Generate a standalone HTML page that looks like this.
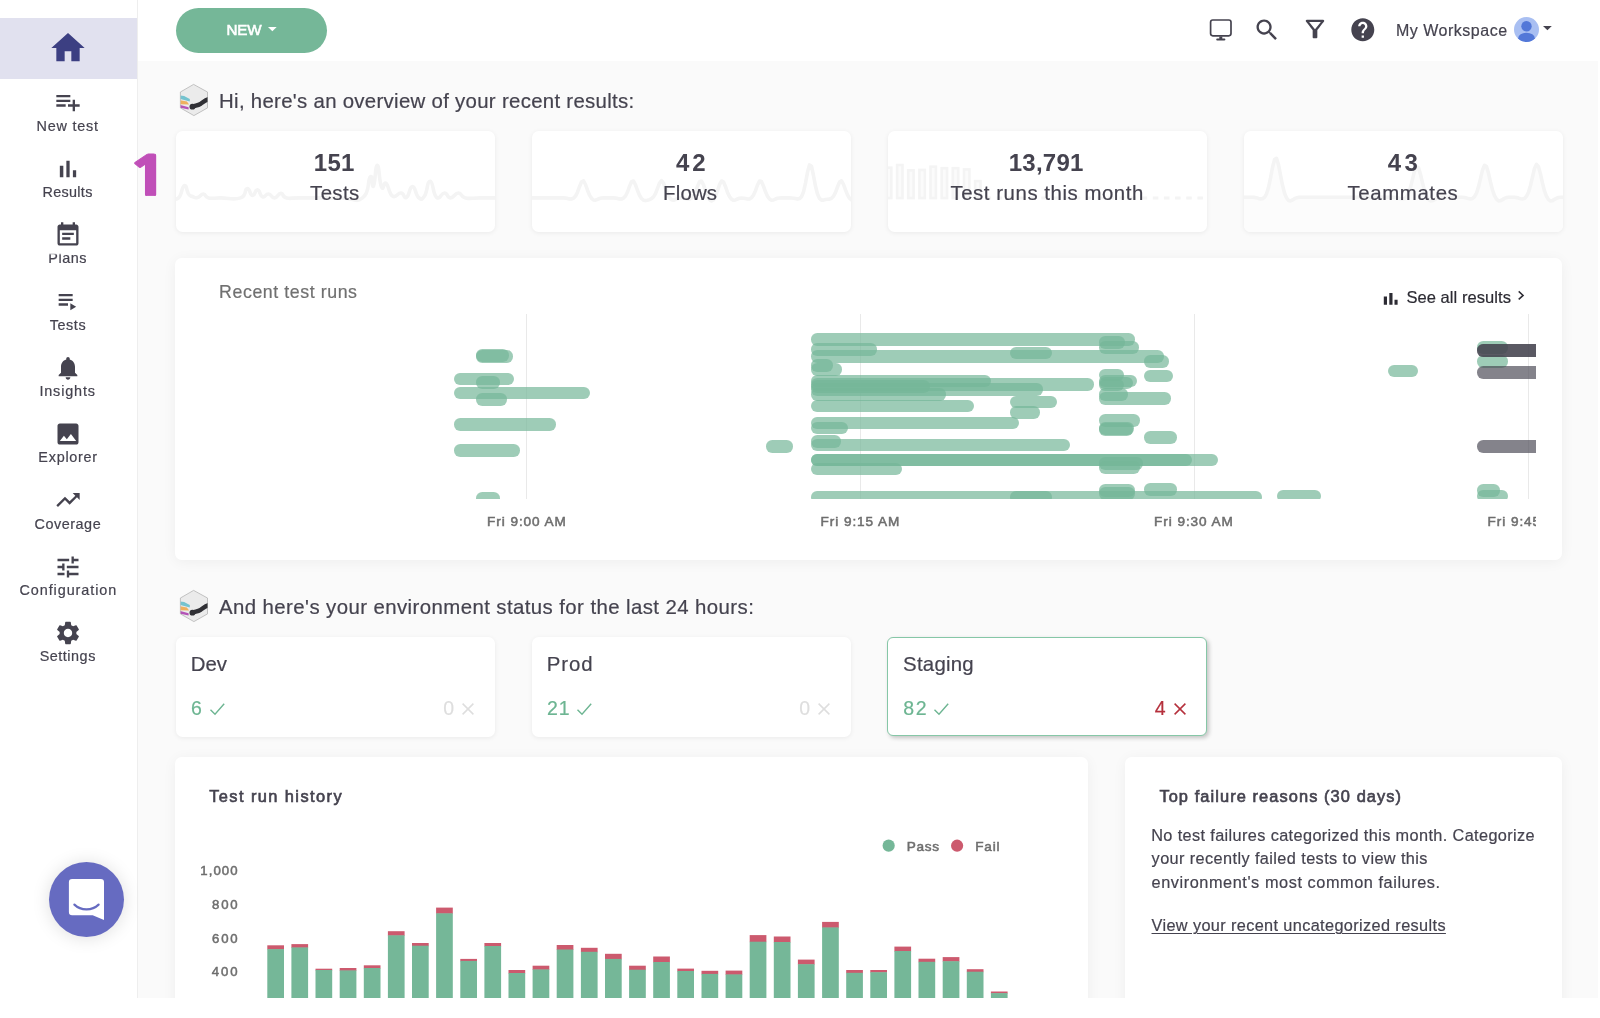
<!DOCTYPE html>
<html lang="en"><head><meta charset="utf-8"><title>Dashboard</title>
<style>
*{box-sizing:border-box;margin:0;padding:0}
html,body{width:1600px;height:1018px;background:#fff;overflow:hidden}
body{font-family:"Liberation Sans",sans-serif;color:#45434f;position:relative}
#app{position:absolute;left:0;top:0;width:1598px;height:998px;overflow:hidden;background:#fafafa}
#app{will-change:transform}
.abs,.ic,.t{position:absolute}
.ic{display:block;overflow:visible}
.t{white-space:nowrap;line-height:1}
.card{position:absolute;background:#fff;border-radius:6.500px;box-shadow:0 1px 5px rgba(0,0,0,.065)}
.big{box-shadow:0 2px 14px rgba(0,0,0,.05)}
#side{position:absolute;left:0;top:0;width:138px;height:998px;background:#fff;border-right:1.800px solid #eee}
#top{position:absolute;left:138px;top:0;width:1460px;height:60.500px;background:#fff}
.pill{position:absolute;height:12.500px;border-radius:6.250px}
</style></head><body><div id="app">
<div id="side"><div class="abs" style="left:0;top:18px;width:136.500px;height:60.500px;background:#e1e1ef"></div><svg class="ic" style="left:47.5px;top:28px;width:40px;height:40px" viewBox="0 0 24 24"><path fill="#3c3f82" d="M10 20v-6h4v6h5v-8h3L12 3 2 12h3v8z"/></svg><svg class="ic" style="left:53.5px;top:88.4px;width:28px;height:28px" viewBox="0 0 24 24"><path fill="#45434f" d="M14 10H2v2h12v-2zm0-4H2v2h12V6zm4 8v-4h-2v4h-4v2h4v4h2v-4h4v-2h-4zM2 16h8v-2H2v2z"/></svg><div class="t" style="left:36.55px;top:119.00px;font-size:14.4px;letter-spacing:0.769px;-webkit-text-stroke:.2px;">New test</div><svg class="ic" style="left:53.5px;top:154.7px;width:28px;height:28px" viewBox="0 0 24 24"><path fill="#45434f" d="M5 9.2h3V19H5zM10.6 5h2.8v14h-2.8zm5.6 8H19v6h-2.8z"/></svg><div class="t" style="left:42.45px;top:185.00px;font-size:14.4px;letter-spacing:0.322px;-webkit-text-stroke:.2px;">Results</div><svg class="ic" style="left:53.5px;top:221.0px;width:28px;height:28px" viewBox="0 0 24 24"><path fill="#45434f" d="M17 10H7v2h10v-2zm2-7h-1V1h-2v2H8V1H6v2H5c-1.11 0-1.99.9-1.99 2L3 19c0 1.1.89 2 2 2h14c1.1 0 2-.9 2-2V5c0-1.1-.9-2-2-2zm0 16H5V8h14v11zm-5-5H7v2h7v-2z"/></svg><div class="t" style="left:48.35px;top:251.00px;font-size:14.4px;letter-spacing:0.539px;-webkit-text-stroke:.2px;">Plans</div><svg class="ic" style="left:53.5px;top:287.29999999999995px;width:28px;height:28px" viewBox="0 0 24 24"><path fill="#45434f" d="M4 10h12v2H4zm0-4h12v2H4zm0 8h8v2H4zm10 0v6l5-3z"/></svg><div class="t" style="left:49.71px;top:318.00px;font-size:14.4px;letter-spacing:0.592px;-webkit-text-stroke:.2px;">Tests</div><svg class="ic" style="left:53.5px;top:353.6px;width:28px;height:28px" viewBox="0 0 24 24"><path fill="#45434f" d="M12 22c1.1 0 2-.9 2-2h-4c0 1.1.89 2 2 2zm6-6v-5c0-3.07-1.64-5.64-4.5-6.32V4c0-.83-.67-1.5-1.5-1.5s-1.5.67-1.5 1.5v.68C7.63 5.36 6 7.92 6 11v5l-2 2v1h16v-1l-2-2z"/></svg><div class="t" style="left:39.40px;top:384.00px;font-size:14.4px;letter-spacing:0.856px;-webkit-text-stroke:.2px;">Insights</div><svg class="ic" style="left:53.5px;top:419.9px;width:28px;height:28px" viewBox="0 0 24 24"><path fill="#45434f" d="M21 19V5c0-1.1-.9-2-2-2H5c-1.1 0-2 .9-2 2v14c0 1.1.9 2 2 2h14c1.1 0 2-.9 2-2zM8.5 13.5l2.5 3.01L14.5 12l4.5 6H5l3.5-4.5z"/></svg><div class="t" style="left:38.35px;top:450.00px;font-size:14.4px;letter-spacing:0.747px;-webkit-text-stroke:.2px;">Explorer</div><svg class="ic" style="left:53.5px;top:486.19999999999993px;width:28px;height:28px" viewBox="0 0 24 24"><path fill="#45434f" d="M16 6l2.29 2.29-4.88 4.88-4-4L2 16.59 3.41 18l6-6 4 4 6.3-6.29L22 12V6z"/></svg><div class="t" style="left:34.58px;top:517.00px;font-size:14.4px;letter-spacing:0.525px;-webkit-text-stroke:.2px;">Coverage</div><svg class="ic" style="left:53.5px;top:552.5px;width:28px;height:28px" viewBox="0 0 24 24"><path fill="#45434f" d="M3 17v2h6v-2H3zM3 5v2h10V5H3zm10 16v-2h8v-2h-8v-2h-2v6h2zM7 9v2H3v2h4v2h2V9H7zm14 4v-2H11v2h10zm-6-4h2V7h4V5h-4V3h-2v6z"/></svg><div class="t" style="left:19.48px;top:583.00px;font-size:14.4px;letter-spacing:0.931px;-webkit-text-stroke:.2px;">Configuration</div><svg class="ic" style="left:53.5px;top:618.8px;width:28px;height:28px" viewBox="0 0 24 24"><path fill="#45434f" d="M19.14 12.94c.04-.3.06-.61.06-.94 0-.32-.02-.64-.07-.94l2.03-1.58c.18-.14.23-.41.12-.61l-1.92-3.32c-.12-.22-.37-.29-.59-.22l-2.39.96c-.5-.38-1.03-.7-1.62-.94l-.36-2.54c-.04-.24-.24-.41-.48-.41h-3.84c-.24 0-.43.17-.47.41l-.36 2.54c-.59.24-1.13.57-1.62.94l-2.39-.96c-.22-.08-.47 0-.59.22L2.74 8.87c-.12.21-.08.47.12.61l2.03 1.58c-.05.3-.09.63-.09.94s.02.64.07.94l-2.03 1.58c-.18.14-.23.41-.12.61l1.92 3.32c.12.22.37.29.59.22l2.39-.96c.5.38 1.03.7 1.62.94l.36 2.54c.05.24.24.41.48.41h3.84c.24 0 .44-.17.47-.41l.36-2.54c.59-.24 1.13-.56 1.62-.94l2.39.96c.22.08.47 0 .59-.22l1.92-3.32c.12-.22.07-.47-.12-.61l-2.01-1.58zM12 15.6c-1.98 0-3.6-1.62-3.6-3.6s1.62-3.6 3.6-3.6 3.6 1.62 3.6 3.6-1.62 3.6-3.6 3.6z"/></svg><div class="t" style="left:39.65px;top:649.00px;font-size:14.4px;letter-spacing:0.528px;-webkit-text-stroke:.2px;">Settings</div><div class="abs" style="left:30px;top:246px;width:80px;height:8.500px;background:linear-gradient(#fff 80%,rgba(255,255,255,0))"></div></div><div id="top"></div><div class="abs" style="left:176.400px;top:7.900px;width:150.900px;height:44.700px;border-radius:22.500px;background:#75b798"></div><div class="t" style="left:226.51px;top:22.00px;font-size:15.2px;letter-spacing:-0.130px;-webkit-text-stroke:0.59px;color:#fff;">NEW</div><svg class="ic" style="left:267.900px;top:27px;width:8.700px;height:4.300px" viewBox="0 0 8.700 4.300"><path d="M0 0h8.700L4.350 4.300z" fill="#fff"/></svg><svg class="ic" style="left:1208px;top:17px;width:26px;height:26px" viewBox="1208 17 26 26"><rect x="1210.600" y="20" width="20.400" height="15.800" rx="2.200" fill="none" stroke="#45434f" stroke-width="1.700"/><path fill="#45434f" d="M1219.300 36.500h3v2.100h2.200c.5 0 .9.400.9.900s-.4.900-.9.900h-7.400c-.5 0-.9-.4-.9-.9s.4-.9.900-.9h2.200z"/></svg><svg class="ic" style="left:1253.4px;top:15.5px;width:28px;height:28px" viewBox="0 0 24 24"><path fill="#45434f" d="M15.5 14h-.79l-.28-.27C15.41 12.59 16 11.11 16 9.5 16 5.91 13.09 3 9.5 3S3 5.91 3 9.5 5.91 16 9.5 16c1.61 0 3.09-.59 4.23-1.57l.27.28v.79l5 4.99L20.49 19l-4.99-5zm-6 0C7.01 14 5 11.99 5 9.5S7.01 5 9.5 5 14 7.01 14 9.5 11.99 14 9.5 14z"/></svg><svg class="ic" style="left:1301px;top:15.4px;width:28px;height:28px" viewBox="0 0 24 24"><path fill="#45434f" d="M7 6h10l-5.01 6.3L7 6zm-2.75-.39C6.27 8.2 10 13 10 13v6c0 .55.45 1 1 1h2c.55 0 1-.45 1-1v-6s3.72-4.8 5.74-7.39c.51-.66.04-1.61-.79-1.61H5.04c-.83 0-1.3.95-.79 1.61z"/></svg><svg class="ic" style="left:1348.7px;top:16.1px;width:27.6px;height:27.6px" viewBox="0 0 24 24"><path fill="#45434f" d="M12 2C6.48 2 2 6.48 2 12s4.48 10 10 10 10-4.48 10-10S17.52 2 12 2zm1 17h-2v-2h2v2zm2.07-7.75l-.9.92C13.45 12.9 13 13.5 13 15h-2v-.5c0-1.1.45-2.1 1.17-2.83l1.24-1.26c.37-.36.59-.86.59-1.41 0-1.1-.9-2-2-2s-2 .9-2 2H8c0-2.21 1.79-4 4-4s4 1.79 4 4c0 .88-.36 1.68-.93 2.25z"/></svg><div class="t" style="left:1395.92px;top:23.00px;font-size:16px;letter-spacing:0.518px;-webkit-text-stroke:.2px;">My Workspace</div><svg class="ic" style="left:1513.500px;top:17px;width:25px;height:25px" viewBox="0 0 25 25"><defs><clipPath id="av"><circle cx="12.500" cy="12.500" r="12.500"/></clipPath></defs><circle cx="12.500" cy="12.500" r="12.500" fill="#a9bff2"/><g clip-path="url(#av)" fill="#5378d8"><circle cx="12.500" cy="9.200" r="5.200"/><ellipse cx="12.500" cy="21.200" rx="8.300" ry="5.500"/></g></svg><svg class="ic" style="left:1543px;top:26px;width:8.800px;height:4.300px" viewBox="0 0 8.800 4.300"><path d="M0 0h8.800L4.400 4.300z" fill="#45434f"/></svg><svg class="ic" style="left:180px;top:84px;width:28px;height:32px" viewBox="0 0 28 32"><defs><clipPath id="lga"><path d="M13.600.4 27.500 8v15.900L13.900 31.600.4 23.900V8z"/></clipPath></defs><path d="M13.600.4 27.500 8v15.900L13.900 31.600.4 23.900V8z" fill="#ebebeb" stroke="#b4b4b4" stroke-width=".8" stroke-linejoin="round"/><g clip-path="url(#lga)"><path d="M.4 11.400l3.700.6 5.700 3v2.500L.4 15z" fill="#74c3cf"/><path d="M.4 16.200l6.500 1.300 2.200 3-8.700-.3z" fill="#eeb05e"/><path d="M.4 21l8.200 2.300v2.300L.4 23.800z" fill="#b453b6"/><path d="M12.600 22.600c3-1.200 5-1 8-2.800 2-1.200 4.500-3.500 8-4.600" fill="none" stroke="#303035" stroke-width="4.400" stroke-linecap="round"/><circle cx="12.400" cy="22.700" r="2.900" fill="#303035"/></g></svg><div class="t" style="left:219.07px;top:91.00px;font-size:20.4px;letter-spacing:0.298px;-webkit-text-stroke:.2px;">Hi, here's an overview of your recent results:</div><div class="t" style="left:127.400px;top:149px;font-family:NanumGothic,'Liberation Sans',sans-serif;font-weight:800;font-size:54px;-webkit-text-stroke:.9px;transform:scaleX(1.35);transform-origin:0 0;color:#c04fb8">1</div><div class="card" style="left:175.5px;top:131px;width:319px;height:101px;overflow:hidden"><svg class="ic" style="left:0;top:0;width:319px;height:101px" viewBox="175.5 131 319 101"><path d="M170.0 197.9C172.1 197.9 174.3 201.2 178.0 197.9C181.7 194.6 181.1 186.6 183.8 185.6C186.5 184.6 185.8 191.1 188.0 194.0C190.2 196.9 189.6 195.6 192.0 196.5C194.4 197.4 194.1 198.2 197.0 197.5C199.9 196.8 200.1 193.9 203.0 194.0C205.9 194.1 203.5 196.9 208.0 197.9C212.5 198.9 211.5 197.9 220.0 197.9C228.5 197.9 232.9 200.4 240.0 197.9C247.1 195.4 243.3 189.3 246.5 188.7C249.7 188.1 249.2 195.2 252.0 195.5C254.8 195.8 254.3 189.5 257.0 189.8C259.7 190.1 259.1 195.7 262.0 196.8C264.9 197.9 264.8 193.7 268.0 194.0C271.2 194.3 270.7 198.1 274.0 197.9C277.3 197.7 277.3 193.4 280.5 193.4C283.7 193.4 280.8 196.7 286.0 197.9C291.2 199.1 285.6 197.9 300.0 197.9C314.4 197.9 323.5 197.9 340.0 197.9C356.5 197.9 354.1 203.5 362.0 197.9C369.9 192.3 366.8 180.2 369.7 177.0C372.6 173.8 371.1 189.1 373.0 186.0C374.9 182.9 374.7 165.1 376.8 165.4C378.9 165.7 378.6 182.2 381.0 187.0C383.4 191.8 382.8 181.0 385.7 183.4C388.6 185.8 388.1 193.4 392.0 196.0C395.9 198.6 396.8 192.7 400.5 193.0C404.2 193.3 402.9 199.0 406.0 197.3C409.1 195.6 408.8 186.5 412.0 186.6C415.2 186.7 414.8 195.0 418.0 197.5C421.2 200.0 420.9 200.3 424.0 196.0C427.1 191.7 426.5 181.0 429.7 181.3C432.9 181.6 432.2 194.2 436.0 197.3C439.8 200.4 440.3 192.8 444.0 193.0C447.7 193.2 446.3 197.9 450.0 197.9C453.7 197.9 454.0 193.0 458.0 193.0C462.0 193.0 459.1 196.6 465.0 197.9C470.9 199.2 470.7 197.9 480.0 197.9C489.3 197.9 494.7 197.9 500.0 197.9" fill="none" stroke="#f4f4f4" stroke-width="3.600" stroke-linejoin="round"/></svg></div><div class="t" style="left:313.81px;top:151.00px;font-size:24px;letter-spacing:0.290px;font-weight:bold;">151</div><div class="t" style="left:310.09px;top:183.00px;font-size:20.4px;letter-spacing:0.372px;-webkit-text-stroke:.2px;">Tests</div><div class="card" style="left:531.5px;top:131px;width:319px;height:101px;overflow:hidden"><svg class="ic" style="left:0;top:0;width:319px;height:101px" viewBox="531.5 131 319 101"><path d="M525 197.9L527 197.9L529 197.9L531 197.9L533 197.9L535 197.9L537 197.9L539 197.9L541 197.9L543 197.9L545 197.9L547 197.9L549 197.9L551 197.9L553 197.9L555 197.9L557 197.9L559 197.9L561 197.9L563 197.9L565 198.1L567 198.4L569 198.9L571 199.0L573 198.2L575 196.1L577 192.2L579 186.7L581 181.9L583 180.9L585 184.5L587 190.2L589 195.1L591 198.3L593 200.0L595 200.2L597 199.3L599 198.5L601 198.0L603 197.9L605 197.9L607 197.9L609 197.9L611 197.9L613 197.9L615 198.1L617 198.4L619 198.9L621 199.0L623 198.1L625 196.0L627 192.0L629 186.4L631 181.7L633 181.0L635 184.8L637 190.5L639 195.3L641 198.5L643 200.2L645 200.6L647 200.2L649 199.6L651 198.7L653 196.9L655 193.6L657 188.4L659 183.1L661 180.7L663 183.1L665 188.5L667 193.8L669 197.5L671 199.7L673 200.3L675 199.6L677 198.7L679 198.1L681 198.0L683 198.1L685 198.4L687 198.9L689 199.0L691 198.1L693 196.0L695 192.0L697 186.4L699 181.7L701 181.0L703 184.9L705 190.8L707 196.0L709 199.6L711 201.0L713 199.8L715 196.2L717 190.7L719 184.7L721 181.0L723 181.9L725 186.7L727 192.4L729 196.6L731 199.2L733 200.3L735 199.9L737 199.0L739 198.3L741 198.0L743 198.2L745 198.6L747 199.0L749 198.9L751 197.7L753 195.1L755 190.7L757 185.0L759 181.1L761 181.6L763 186.2L765 191.8L767 196.2L769 199.0L771 200.2L773 200.0L775 199.0L777 198.3L779 198.0L781 197.9L783 197.9L785 197.9L787 197.9L789 197.9L791 198.0L793 198.2L795 198.6L797 199.0L799 198.6L801 196.7L803 191.9L805 183.1L807 172.3L809 164.9L811 166.3L813 175.5L815 186.3L817 194.1L819 198.4L821 200.1L823 200.1L825 199.5L827 199.2L829 199.1L831 198.3L833 196.3L835 192.4L837 187.0L839 182.1L841 180.9L843 184.3L845 189.9L847 194.9L849 198.2L851 200.0L853 200.2L855 199.4L857 198.5L859 198.1L861 197.9L863 197.9L865 197.9L867 197.9L869 197.9" fill="none" stroke="#f4f4f4" stroke-width="3.600" stroke-linejoin="round"/></svg></div><div class="t" style="left:675.94px;top:151.00px;font-size:24px;letter-spacing:2.960px;font-weight:bold;">42</div><div class="t" style="left:663.02px;top:183.00px;font-size:20.4px;letter-spacing:0.201px;-webkit-text-stroke:.2px;">Flows</div><div class="card" style="left:887.5px;top:131px;width:319px;height:101px;overflow:hidden"><svg class="ic" style="left:0;top:0;width:319px;height:101px" viewBox="887.5 131 319 101"><rect x="885.4" y="167.7" width="5.400" height="30.4" fill="#fbfbfb" stroke="#f4f4f4" stroke-width="2.600"/><rect x="896.6" y="165.0" width="5.400" height="33.1" fill="#fbfbfb" stroke="#f4f4f4" stroke-width="2.600"/><rect x="907.7" y="170.3" width="5.400" height="27.8" fill="#fbfbfb" stroke="#f4f4f4" stroke-width="2.600"/><rect x="918.9" y="169.9" width="5.400" height="28.2" fill="#fbfbfb" stroke="#f4f4f4" stroke-width="2.600"/><rect x="930.0" y="166.7" width="5.400" height="31.4" fill="#fbfbfb" stroke="#f4f4f4" stroke-width="2.600"/><rect x="941.2" y="168.2" width="5.400" height="29.9" fill="#fbfbfb" stroke="#f4f4f4" stroke-width="2.600"/><rect x="952.3" y="168.2" width="5.400" height="29.9" fill="#fbfbfb" stroke="#f4f4f4" stroke-width="2.600"/><rect x="963.5" y="169.4" width="5.400" height="28.7" fill="#fbfbfb" stroke="#f4f4f4" stroke-width="2.600"/><rect x="974.6" y="181.1" width="5.400" height="17.0" fill="#fbfbfb" stroke="#f4f4f4" stroke-width="2.600"/><path d="M985.0 198h230" stroke="#f4f4f4" stroke-width="3" stroke-dasharray="5.600 5.550" fill="none"/></svg></div><div class="t" style="left:1008.76px;top:151.00px;font-size:24px;letter-spacing:0.240px;font-weight:bold;">13,791</div><div class="t" style="left:950.49px;top:183.00px;font-size:20.4px;letter-spacing:0.545px;-webkit-text-stroke:.2px;">Test runs this month</div><div class="card" style="left:1243.5px;top:131px;width:319px;height:101px;overflow:hidden"><svg class="ic" style="left:0;top:0;width:319px;height:101px" viewBox="1243.5 131 319 101"><path d="M1236 197.2L1238 197.2L1240 197.2L1242 197.2L1244 197.2L1246 197.2L1248 197.2L1250 197.2L1252 197.3L1254 197.4L1256 197.8L1258 198.4L1260 198.9L1262 198.8L1264 197.3L1266 193.8L1268 187.6L1270 178.2L1272 167.5L1274 159.6L1276 158.4L1278 164.6L1280 175.1L1282 185.3L1284 193.0L1286 197.9L1288 200.4L1290 200.9L1292 200.0L1294 198.7L1296 197.8L1298 197.4L1300 197.2L1302 197.2L1304 197.2L1306 197.2L1308 197.2L1310 197.2L1312 197.2L1314 197.2L1316 197.2L1318 197.2L1320 197.2L1322 197.2L1324 197.2L1326 197.2L1328 197.2L1330 197.2L1332 197.2L1334 197.2L1336 197.2L1338 197.2L1340 197.2L1342 197.2L1344 197.2L1346 197.2L1348 197.2L1350 197.2L1352 197.2L1354 197.2L1356 197.2L1358 197.2L1360 197.2L1362 197.2L1364 197.2L1366 197.2L1368 197.2L1370 197.2L1372 197.2L1374 197.2L1376 197.2L1378 197.2L1380 197.2L1382 197.2L1384 197.2L1386 197.2L1388 197.2L1390 197.2L1392 197.2L1394 197.3L1396 197.5L1398 198.0L1400 198.6L1402 199.0L1404 198.6L1406 196.8L1408 193.3L1410 187.4L1412 179.4L1414 171.3L1416 166.7L1418 167.9L1420 174.4L1422 182.9L1424 190.5L1426 195.9L1428 199.3L1430 200.9L1432 200.7L1434 199.6L1436 198.4L1438 197.6L1440 197.3L1442 197.2L1444 197.2L1446 197.2L1448 197.2L1450 197.2L1452 197.2L1454 197.2L1456 197.2L1458 197.2L1460 197.2L1462 197.3L1464 197.5L1466 198.0L1468 198.6L1470 199.0L1472 198.5L1474 196.7L1476 193.1L1478 186.9L1480 178.6L1482 170.1L1484 165.3L1486 166.6L1488 173.3L1490 182.2L1492 190.1L1494 195.7L1496 199.2L1498 200.9L1500 200.7L1502 199.6L1504 198.4L1506 197.6L1508 197.3L1510 197.2L1512 197.2L1514 197.3L1516 197.6L1518 198.1L1520 198.7L1522 199.0L1524 198.4L1526 196.3L1528 192.2L1530 185.5L1532 176.8L1534 168.5L1536 164.4L1538 166.7L1540 174.1L1542 183.2L1544 190.9L1546 196.3L1548 199.6L1550 200.9L1552 200.6L1554 199.4L1556 198.2L1558 197.5L1560 197.3L1562 197.2L1564 197.2L1566 197.2L1568 197.2L1570 197.2L1572 197.2L1574 197.2L1576 197.2L1578 197.2L1580 197.2V240H1236z" fill="#fcfcfc"/><path d="M1236 197.2L1238 197.2L1240 197.2L1242 197.2L1244 197.2L1246 197.2L1248 197.2L1250 197.2L1252 197.3L1254 197.4L1256 197.8L1258 198.4L1260 198.9L1262 198.8L1264 197.3L1266 193.8L1268 187.6L1270 178.2L1272 167.5L1274 159.6L1276 158.4L1278 164.6L1280 175.1L1282 185.3L1284 193.0L1286 197.9L1288 200.4L1290 200.9L1292 200.0L1294 198.7L1296 197.8L1298 197.4L1300 197.2L1302 197.2L1304 197.2L1306 197.2L1308 197.2L1310 197.2L1312 197.2L1314 197.2L1316 197.2L1318 197.2L1320 197.2L1322 197.2L1324 197.2L1326 197.2L1328 197.2L1330 197.2L1332 197.2L1334 197.2L1336 197.2L1338 197.2L1340 197.2L1342 197.2L1344 197.2L1346 197.2L1348 197.2L1350 197.2L1352 197.2L1354 197.2L1356 197.2L1358 197.2L1360 197.2L1362 197.2L1364 197.2L1366 197.2L1368 197.2L1370 197.2L1372 197.2L1374 197.2L1376 197.2L1378 197.2L1380 197.2L1382 197.2L1384 197.2L1386 197.2L1388 197.2L1390 197.2L1392 197.2L1394 197.3L1396 197.5L1398 198.0L1400 198.6L1402 199.0L1404 198.6L1406 196.8L1408 193.3L1410 187.4L1412 179.4L1414 171.3L1416 166.7L1418 167.9L1420 174.4L1422 182.9L1424 190.5L1426 195.9L1428 199.3L1430 200.9L1432 200.7L1434 199.6L1436 198.4L1438 197.6L1440 197.3L1442 197.2L1444 197.2L1446 197.2L1448 197.2L1450 197.2L1452 197.2L1454 197.2L1456 197.2L1458 197.2L1460 197.2L1462 197.3L1464 197.5L1466 198.0L1468 198.6L1470 199.0L1472 198.5L1474 196.7L1476 193.1L1478 186.9L1480 178.6L1482 170.1L1484 165.3L1486 166.6L1488 173.3L1490 182.2L1492 190.1L1494 195.7L1496 199.2L1498 200.9L1500 200.7L1502 199.6L1504 198.4L1506 197.6L1508 197.3L1510 197.2L1512 197.2L1514 197.3L1516 197.6L1518 198.1L1520 198.7L1522 199.0L1524 198.4L1526 196.3L1528 192.2L1530 185.5L1532 176.8L1534 168.5L1536 164.4L1538 166.7L1540 174.1L1542 183.2L1544 190.9L1546 196.3L1548 199.6L1550 200.9L1552 200.6L1554 199.4L1556 198.2L1558 197.5L1560 197.3L1562 197.2L1564 197.2L1566 197.2L1568 197.2L1570 197.2L1572 197.2L1574 197.2L1576 197.2L1578 197.2L1580 197.2" fill="none" stroke="#f4f4f4" stroke-width="3.600" stroke-linejoin="round"/></svg></div><div class="t" style="left:1387.74px;top:151.00px;font-size:24px;letter-spacing:3.360px;font-weight:bold;">43</div><div class="t" style="left:1347.39px;top:183.00px;font-size:20.4px;letter-spacing:0.632px;-webkit-text-stroke:.2px;">Teammates</div><div class="card big" style="left:175.400px;top:258.300px;width:1386.800px;height:302.200px"></div><div class="t" style="left:219.08px;top:284.00px;font-size:17.8px;letter-spacing:0.564px;-webkit-text-stroke:.2px;color:#707070;">Recent test runs</div><div class="t" style="left:1406.46px;top:289.00px;font-size:16.5px;letter-spacing:0.057px;-webkit-text-stroke:.2px;color:#2c2b33;">See all results</div><svg class="ic" style="left:1383px;top:292px;width:16px;height:14px" viewBox="1383 292 16 14"><path fill="#2c2b33" d="M1383.800 296.600h3.200v8.200h-3.200zM1389.300 292.900h3.200v11.900h-3.200zM1394.500 299.800h3.100v5h-3.100z"/></svg><svg class="ic" style="left:1516px;top:289px;width:10px;height:12px" viewBox="1516 289 10 12"><path d="M1518.700 291.400l4.400 4-4.400 4" fill="none" stroke="#2c2b33" stroke-width="1.500"/></svg><div class="abs" style="left:219px;top:314px;width:1317px;height:185.4px;overflow:hidden"><div class="abs" style="left:307.2px;top:0;width:1.200px;height:200px;background:#e9e9e9"></div><div class="abs" style="left:640.9px;top:0;width:1.200px;height:200px;background:#e9e9e9"></div><div class="abs" style="left:974.7px;top:0;width:1.200px;height:200px;background:#e9e9e9"></div><div class="abs" style="left:1308.5px;top:0;width:1.200px;height:200px;background:#e9e9e9"></div><div class="pill" style="left:257.0px;top:35.0px;width:33.0px;background:rgba(117,183,152,.7)"></div><div class="pill" style="left:257.0px;top:36.2px;width:37.0px;background:rgba(117,183,152,.7)"></div><div class="pill" style="left:235.0px;top:58.5px;width:60.0px;background:rgba(117,183,152,.7)"></div><div class="pill" style="left:257.0px;top:62.0px;width:24.0px;background:rgba(117,183,152,.7)"></div><div class="pill" style="left:235.0px;top:72.5px;width:135.5px;background:rgba(117,183,152,.7)"></div><div class="pill" style="left:257.0px;top:79.0px;width:31.0px;background:rgba(117,183,152,.7)"></div><div class="pill" style="left:235.0px;top:104.0px;width:102.0px;background:rgba(117,183,152,.7)"></div><div class="pill" style="left:235.0px;top:130.0px;width:66.0px;background:rgba(117,183,152,.7)"></div><div class="pill" style="left:257.0px;top:178.0px;width:24.0px;background:rgba(117,183,152,.7)"></div><div class="pill" style="left:547.0px;top:126.0px;width:27.0px;background:rgba(117,183,152,.7)"></div><div class="pill" style="left:591.5px;top:19.0px;width:324.5px;background:rgba(117,183,152,.7)"></div><div class="pill" style="left:591.5px;top:29.0px;width:66.5px;background:rgba(117,183,152,.7)"></div><div class="pill" style="left:591.5px;top:36.0px;width:353.5px;background:rgba(117,183,152,.7)"></div><div class="pill" style="left:591.5px;top:45.0px;width:22.5px;background:rgba(117,183,152,.7)"></div><div class="pill" style="left:591.5px;top:49.3px;width:31.5px;background:rgba(117,183,152,.7)"></div><div class="pill" style="left:591.5px;top:60.8px;width:180.1px;background:rgba(117,183,152,.7)"></div><div class="pill" style="left:591.5px;top:64.0px;width:283.5px;background:rgba(117,183,152,.7)"></div><div class="pill" style="left:591.5px;top:66.0px;width:119.5px;background:rgba(117,183,152,.7)"></div><div class="pill" style="left:591.5px;top:69.0px;width:232.0px;background:rgba(117,183,152,.7)"></div><div class="pill" style="left:591.5px;top:74.0px;width:135.5px;background:rgba(117,183,152,.7)"></div><div class="pill" style="left:591.5px;top:85.7px;width:163.5px;background:rgba(117,183,152,.7)"></div><div class="pill" style="left:591.5px;top:102.7px;width:208.1px;background:rgba(117,183,152,.7)"></div><div class="pill" style="left:591.5px;top:107.5px;width:37.5px;background:rgba(117,183,152,.7)"></div><div class="pill" style="left:591.5px;top:121.0px;width:30.5px;background:rgba(117,183,152,.7)"></div><div class="pill" style="left:591.5px;top:124.5px;width:259.5px;background:rgba(117,183,152,.7)"></div><div class="pill" style="left:591.5px;top:139.5px;width:381.5px;background:rgba(117,183,152,.7)"></div><div class="pill" style="left:591.5px;top:139.5px;width:407.5px;background:rgba(117,183,152,.7)"></div><div class="pill" style="left:591.5px;top:148.5px;width:91.5px;background:rgba(117,183,152,.7)"></div><div class="pill" style="left:591.5px;top:176.8px;width:451.5px;background:rgba(117,183,152,.7)"></div><div class="pill" style="left:791.0px;top:32.5px;width:42.0px;background:rgba(117,183,152,.7)"></div><div class="pill" style="left:791.0px;top:81.6px;width:46.5px;background:rgba(117,183,152,.7)"></div><div class="pill" style="left:791.0px;top:92.2px;width:29.7px;background:rgba(117,183,152,.7)"></div><div class="pill" style="left:791.0px;top:176.8px;width:42.0px;background:rgba(117,183,152,.7)"></div><div class="pill" style="left:880.0px;top:22.0px;width:26.0px;background:rgba(117,183,152,.7)"></div><div class="pill" style="left:880.0px;top:27.0px;width:40.0px;background:rgba(117,183,152,.7)"></div><div class="pill" style="left:880.0px;top:54.5px;width:25.0px;background:rgba(117,183,152,.7)"></div><div class="pill" style="left:880.0px;top:60.7px;width:38.3px;background:rgba(117,183,152,.7)"></div><div class="pill" style="left:880.0px;top:64.5px;width:25.0px;background:rgba(117,183,152,.7)"></div><div class="pill" style="left:880.0px;top:62.5px;width:34.0px;background:rgba(117,183,152,.7)"></div><div class="pill" style="left:880.0px;top:74.0px;width:29.4px;background:rgba(117,183,152,.7)"></div><div class="pill" style="left:880.0px;top:78.0px;width:72.3px;background:rgba(117,183,152,.7)"></div><div class="pill" style="left:880.0px;top:100.0px;width:40.6px;background:rgba(117,183,152,.7)"></div><div class="pill" style="left:880.0px;top:108.3px;width:34.6px;background:rgba(117,183,152,.7)"></div><div class="pill" style="left:880.0px;top:109.0px;width:34.0px;background:rgba(117,183,152,.7)"></div><div class="pill" style="left:880.0px;top:143.0px;width:43.7px;background:rgba(117,183,152,.7)"></div><div class="pill" style="left:880.0px;top:147.0px;width:40.6px;background:rgba(117,183,152,.7)"></div><div class="pill" style="left:880.0px;top:170.0px;width:36.0px;background:rgba(117,183,152,.7)"></div><div class="pill" style="left:880.0px;top:173.4px;width:36.0px;background:rgba(117,183,152,.7)"></div><div class="pill" style="left:925.0px;top:41.0px;width:24.5px;background:rgba(117,183,152,.7)"></div><div class="pill" style="left:925.0px;top:55.7px;width:29.0px;background:rgba(117,183,152,.7)"></div><div class="pill" style="left:925.0px;top:117.0px;width:33.3px;background:rgba(117,183,152,.7)"></div><div class="pill" style="left:925.0px;top:169.3px;width:33.3px;background:rgba(117,183,152,.7)"></div><div class="pill" style="left:1057.6px;top:175.6px;width:44.4px;background:rgba(117,183,152,.7)"></div><div class="pill" style="left:1169.0px;top:50.5px;width:29.6px;background:rgba(117,183,152,.7)"></div><div class="pill" style="left:1258.0px;top:27.0px;width:31.0px;background:rgba(117,183,152,.7)"></div><div class="pill" style="left:1258.0px;top:41.2px;width:31.0px;background:rgba(117,183,152,.7)"></div><div class="pill" style="left:1258.0px;top:30.3px;width:123.0px;background:rgba(69,67,79,.66)"></div><div class="pill" style="left:1258.0px;top:30.3px;width:123.0px;background:rgba(69,67,79,.66)"></div><div class="pill" style="left:1258.0px;top:52.0px;width:123.0px;background:rgba(69,67,79,.66)"></div><div class="pill" style="left:1258.0px;top:126.0px;width:123.0px;background:rgba(69,67,79,.66)"></div><div class="pill" style="left:1258.0px;top:170.3px;width:23.0px;background:rgba(117,183,152,.7)"></div><div class="pill" style="left:1258.0px;top:175.6px;width:31.0px;background:rgba(117,183,152,.7)"></div></div><div class="abs" style="left:219px;top:505px;width:1317px;height:30px;overflow:hidden"><div class="t" style="left:268.04px;top:10.00px;font-size:13.6px;letter-spacing:0.935px;-webkit-text-stroke:0.53px;color:#6e6e6e;">Fri 9:00 AM</div><div class="t" style="left:601.54px;top:10.00px;font-size:13.6px;letter-spacing:0.935px;-webkit-text-stroke:0.53px;color:#6e6e6e;">Fri 9:15 AM</div><div class="t" style="left:935.04px;top:10.00px;font-size:13.6px;letter-spacing:0.935px;-webkit-text-stroke:0.53px;color:#6e6e6e;">Fri 9:30 AM</div><div class="t" style="left:1268.54px;top:10.00px;font-size:13.6px;letter-spacing:0.935px;-webkit-text-stroke:0.53px;color:#6e6e6e;">Fri 9:45 AM</div></div><svg class="ic" style="left:180px;top:589.5px;width:28px;height:32px" viewBox="0 0 28 32"><defs><clipPath id="lgb"><path d="M13.600.4 27.500 8v15.900L13.900 31.600.4 23.900V8z"/></clipPath></defs><path d="M13.600.4 27.500 8v15.900L13.900 31.600.4 23.900V8z" fill="#ebebeb" stroke="#b4b4b4" stroke-width=".8" stroke-linejoin="round"/><g clip-path="url(#lgb)"><path d="M.4 11.400l3.700.6 5.700 3v2.500L.4 15z" fill="#74c3cf"/><path d="M.4 16.200l6.500 1.300 2.200 3-8.700-.3z" fill="#eeb05e"/><path d="M.4 21l8.200 2.300v2.300L.4 23.800z" fill="#b453b6"/><path d="M12.600 22.600c3-1.200 5-1 8-2.800 2-1.200 4.500-3.500 8-4.600" fill="none" stroke="#303035" stroke-width="4.400" stroke-linecap="round"/><circle cx="12.400" cy="22.700" r="2.900" fill="#303035"/></g></svg><div class="t" style="left:219.00px;top:597.00px;font-size:20.4px;letter-spacing:0.414px;-webkit-text-stroke:.2px;">And here's your environment status for the last 24 hours:</div><div class="card" style="left:175.5px;top:637px;width:319px;height:100px"></div><div class="t" style="left:190.67px;top:654.00px;font-size:20.4px;letter-spacing:0.061px;-webkit-text-stroke:.2px;">Dev</div><div class="t" style="left:191.03px;top:699.00px;font-size:19.5px;letter-spacing:0.000px;-webkit-text-stroke:.2px;color:#6db592;">6</div><div class="t" style="left:443.22px;top:699.00px;font-size:19.5px;letter-spacing:0.000px;-webkit-text-stroke:.2px;color:#dedede;">0</div><svg class="ic" style="left:210.4px;top:702px;width:16px;height:14px" viewBox="0 0 16 14"><path d="M.5 7.700l4.500 4.500L14.200 1.800" fill="none" stroke="#6db592" stroke-width="1.400"/></svg><svg class="ic" style="left:462.2px;top:703px;width:12px;height:12px" viewBox="0 0 12 12"><path d="M.6.600l10.800 10.800M11.400.600L.6 11.400" fill="none" stroke="#dedede" stroke-width="1.500"/></svg><div class="card" style="left:531.5px;top:637px;width:319px;height:100px"></div><div class="t" style="left:546.67px;top:654.00px;font-size:20.4px;letter-spacing:0.937px;-webkit-text-stroke:.2px;">Prod</div><div class="t" style="left:547.02px;top:699.00px;font-size:19.5px;letter-spacing:0.908px;-webkit-text-stroke:.2px;color:#6db592;">21</div><div class="t" style="left:799.22px;top:699.00px;font-size:19.5px;letter-spacing:0.000px;-webkit-text-stroke:.2px;color:#dedede;">0</div><svg class="ic" style="left:576.7px;top:702px;width:16px;height:14px" viewBox="0 0 16 14"><path d="M.5 7.700l4.500 4.500L14.200 1.800" fill="none" stroke="#6db592" stroke-width="1.400"/></svg><svg class="ic" style="left:818.2px;top:703px;width:12px;height:12px" viewBox="0 0 12 12"><path d="M.6.600l10.800 10.800M11.400.600L.6 11.400" fill="none" stroke="#dedede" stroke-width="1.500"/></svg><div class="card" style="left:887.4px;top:637px;width:319.200px;height:99.300px;border:1.400px solid #86c7a7;border-radius:6px;box-shadow:2px 2px 4px rgba(0,0,0,.22)"></div><div class="t" style="left:903.08px;top:654.00px;font-size:20.4px;letter-spacing:0.231px;-webkit-text-stroke:.2px;">Staging</div><div class="t" style="left:903.22px;top:699.00px;font-size:19.5px;letter-spacing:1.713px;-webkit-text-stroke:.2px;color:#6db592;">82</div><div class="t" style="left:1154.71px;top:699.00px;font-size:19.5px;letter-spacing:0.000px;-webkit-text-stroke:.2px;color:#b5303c;">4</div><svg class="ic" style="left:933.7px;top:702px;width:16px;height:14px" viewBox="0 0 16 14"><path d="M.5 7.700l4.500 4.500L14.200 1.800" fill="none" stroke="#6db592" stroke-width="1.400"/></svg><svg class="ic" style="left:1174.2px;top:703px;width:12px;height:12px" viewBox="0 0 12 12"><path d="M.6.600l10.800 10.800M11.400.600L.6 11.400" fill="none" stroke="#b5303c" stroke-width="1.500"/></svg><div class="card big" style="left:175.400px;top:757px;width:912.600px;height:300px"></div><div class="t" style="left:209.20px;top:788.00px;font-size:16.4px;letter-spacing:1.418px;-webkit-text-stroke:0.64px;">Test run history</div><svg class="ic" style="left:176px;top:757px;width:912px;height:241px" viewBox="176 757 912 241"><rect x="267.3" y="945.3" width="16.700" height="4.3" fill="#cc5a6e"/><rect x="267.3" y="949.1" width="16.700" height="50.9" fill="#75b798"/><rect x="291.4" y="944.1" width="16.700" height="3.8" fill="#cc5a6e"/><rect x="291.4" y="947.4" width="16.700" height="52.6" fill="#75b798"/><rect x="315.5" y="968.7" width="16.700" height="1.8" fill="#cc5a6e"/><rect x="315.5" y="970.0" width="16.700" height="30.0" fill="#75b798"/><rect x="339.7" y="968.0" width="16.700" height="2.9" fill="#cc5a6e"/><rect x="339.7" y="970.4" width="16.700" height="29.6" fill="#75b798"/><rect x="363.8" y="965.3" width="16.700" height="3.2" fill="#cc5a6e"/><rect x="363.8" y="968.0" width="16.700" height="32.0" fill="#75b798"/><rect x="387.9" y="931.2" width="16.700" height="4.6" fill="#cc5a6e"/><rect x="387.9" y="935.3" width="16.700" height="64.7" fill="#75b798"/><rect x="412.0" y="943.0" width="16.700" height="3.2" fill="#cc5a6e"/><rect x="412.0" y="945.7" width="16.700" height="54.3" fill="#75b798"/><rect x="436.1" y="907.6" width="16.700" height="6.2" fill="#cc5a6e"/><rect x="436.1" y="913.3" width="16.700" height="86.7" fill="#75b798"/><rect x="460.3" y="958.9" width="16.700" height="2.5" fill="#cc5a6e"/><rect x="460.3" y="960.9" width="16.700" height="39.1" fill="#75b798"/><rect x="484.4" y="943.0" width="16.700" height="3.5" fill="#cc5a6e"/><rect x="484.4" y="946.0" width="16.700" height="54.0" fill="#75b798"/><rect x="508.5" y="970.0" width="16.700" height="3.5" fill="#cc5a6e"/><rect x="508.5" y="973.0" width="16.700" height="27.0" fill="#75b798"/><rect x="532.6" y="965.7" width="16.700" height="4.2" fill="#cc5a6e"/><rect x="532.6" y="969.4" width="16.700" height="30.6" fill="#75b798"/><rect x="556.7" y="945.0" width="16.700" height="5.0" fill="#cc5a6e"/><rect x="556.7" y="949.5" width="16.700" height="50.5" fill="#75b798"/><rect x="580.9" y="947.8" width="16.700" height="4.5" fill="#cc5a6e"/><rect x="580.9" y="951.8" width="16.700" height="48.2" fill="#75b798"/><rect x="605.0" y="953.8" width="16.700" height="5.6" fill="#cc5a6e"/><rect x="605.0" y="958.9" width="16.700" height="41.1" fill="#75b798"/><rect x="629.1" y="965.7" width="16.700" height="4.5" fill="#cc5a6e"/><rect x="629.1" y="969.7" width="16.700" height="30.3" fill="#75b798"/><rect x="653.2" y="956.5" width="16.700" height="6.0" fill="#cc5a6e"/><rect x="653.2" y="962.0" width="16.700" height="38.0" fill="#75b798"/><rect x="677.3" y="968.6" width="16.700" height="2.9" fill="#cc5a6e"/><rect x="677.3" y="971.0" width="16.700" height="29.0" fill="#75b798"/><rect x="701.5" y="970.8" width="16.700" height="3.6" fill="#cc5a6e"/><rect x="701.5" y="973.9" width="16.700" height="26.1" fill="#75b798"/><rect x="725.6" y="970.6" width="16.700" height="4.3" fill="#cc5a6e"/><rect x="725.6" y="974.4" width="16.700" height="25.6" fill="#75b798"/><rect x="749.7" y="935.1" width="16.700" height="7.1" fill="#cc5a6e"/><rect x="749.7" y="941.7" width="16.700" height="58.3" fill="#75b798"/><rect x="773.8" y="936.5" width="16.700" height="6.0" fill="#cc5a6e"/><rect x="773.8" y="942.0" width="16.700" height="58.0" fill="#75b798"/><rect x="797.9" y="959.6" width="16.700" height="5.1" fill="#cc5a6e"/><rect x="797.9" y="964.2" width="16.700" height="35.8" fill="#75b798"/><rect x="822.1" y="921.9" width="16.700" height="6.0" fill="#cc5a6e"/><rect x="822.1" y="927.4" width="16.700" height="72.6" fill="#75b798"/><rect x="846.2" y="970.0" width="16.700" height="3.3" fill="#cc5a6e"/><rect x="846.2" y="972.8" width="16.700" height="27.2" fill="#75b798"/><rect x="870.3" y="970.0" width="16.700" height="2.7" fill="#cc5a6e"/><rect x="870.3" y="972.2" width="16.700" height="27.8" fill="#75b798"/><rect x="894.4" y="946.6" width="16.700" height="4.9" fill="#cc5a6e"/><rect x="894.4" y="951.0" width="16.700" height="49.0" fill="#75b798"/><rect x="918.5" y="958.7" width="16.700" height="3.6" fill="#cc5a6e"/><rect x="918.5" y="961.8" width="16.700" height="38.2" fill="#75b798"/><rect x="942.7" y="957.1" width="16.700" height="4.6" fill="#cc5a6e"/><rect x="942.7" y="961.2" width="16.700" height="38.8" fill="#75b798"/><rect x="966.8" y="969.2" width="16.700" height="3.0" fill="#cc5a6e"/><rect x="966.8" y="971.7" width="16.700" height="28.3" fill="#75b798"/><rect x="990.9" y="991.5" width="16.700" height="2.1" fill="#cc5a6e"/><rect x="990.9" y="993.1" width="16.700" height="6.9" fill="#75b798"/><circle cx="888.650" cy="845.650" r="6.100" fill="#75b798"/><circle cx="957.100" cy="845.700" r="6.100" fill="#cc5a6e"/></svg><div class="t" style="left:200.24px;top:864.00px;font-size:13.2px;letter-spacing:1.098px;-webkit-text-stroke:0.51px;color:#6e6e6e;">1,000</div><div class="t" style="left:212.10px;top:898.00px;font-size:13.2px;letter-spacing:1.776px;-webkit-text-stroke:0.51px;color:#6e6e6e;">800</div><div class="t" style="left:211.97px;top:932.00px;font-size:13.2px;letter-spacing:1.842px;-webkit-text-stroke:0.51px;color:#6e6e6e;">600</div><div class="t" style="left:211.87px;top:965.00px;font-size:13.2px;letter-spacing:1.894px;-webkit-text-stroke:0.51px;color:#6e6e6e;">400</div><div class="t" style="left:906.74px;top:840.00px;font-size:13.6px;letter-spacing:0.715px;-webkit-text-stroke:0.53px;color:#6e6e6e;">Pass</div><div class="t" style="left:975.24px;top:840.00px;font-size:13.6px;letter-spacing:0.805px;-webkit-text-stroke:0.53px;color:#6e6e6e;">Fail</div><div class="card big" style="left:1125px;top:757px;width:437.400px;height:300px"></div><div class="t" style="left:1159.40px;top:788.00px;font-size:16.4px;letter-spacing:1.082px;-webkit-text-stroke:0.64px;">Top failure reasons (30 days)</div><div class="t" style="left:1151.20px;top:827.00px;font-size:16.3px;letter-spacing:0.375px;-webkit-text-stroke:.2px;">No test failures categorized this month. Categorize</div><div class="t" style="left:1151.60px;top:850.00px;font-size:16.3px;letter-spacing:0.402px;-webkit-text-stroke:.2px;">your recently failed tests to view this</div><div class="t" style="left:1151.55px;top:874.00px;font-size:16.3px;letter-spacing:0.571px;-webkit-text-stroke:.2px;">environment's most common failures.</div><div class="t" style="left:1151.52px;top:917.00px;font-size:16.3px;letter-spacing:0.372px;-webkit-text-stroke:.2px;text-decoration:underline;text-underline-offset:2px;text-decoration-thickness:1.200px;">View your recent uncategorized results</div><div class="abs" style="left:49px;top:862px;width:75px;height:75px;border-radius:50%;background:#666bc1;box-shadow:0 1px 18px rgba(0,0,0,.13)"></div><svg class="ic" style="left:60px;top:870px;width:54px;height:58px" viewBox="60 870 54 58"><path d="M72.100 878.900h28.700a3.200 3.200 0 0 1 3.200 3.200V920l-11.300-4.800H72.100a3.200 3.200 0 0 1-3.200-3.200v-29.900a3.200 3.200 0 0 1 3.200-3.200z" fill="#fff"/><path d="M74.400 904.600c6.500 6.300 17.700 6.300 24.200 0" fill="none" stroke="#666bc1" stroke-width="2.200" stroke-linecap="round"/></svg></div></body></html>
